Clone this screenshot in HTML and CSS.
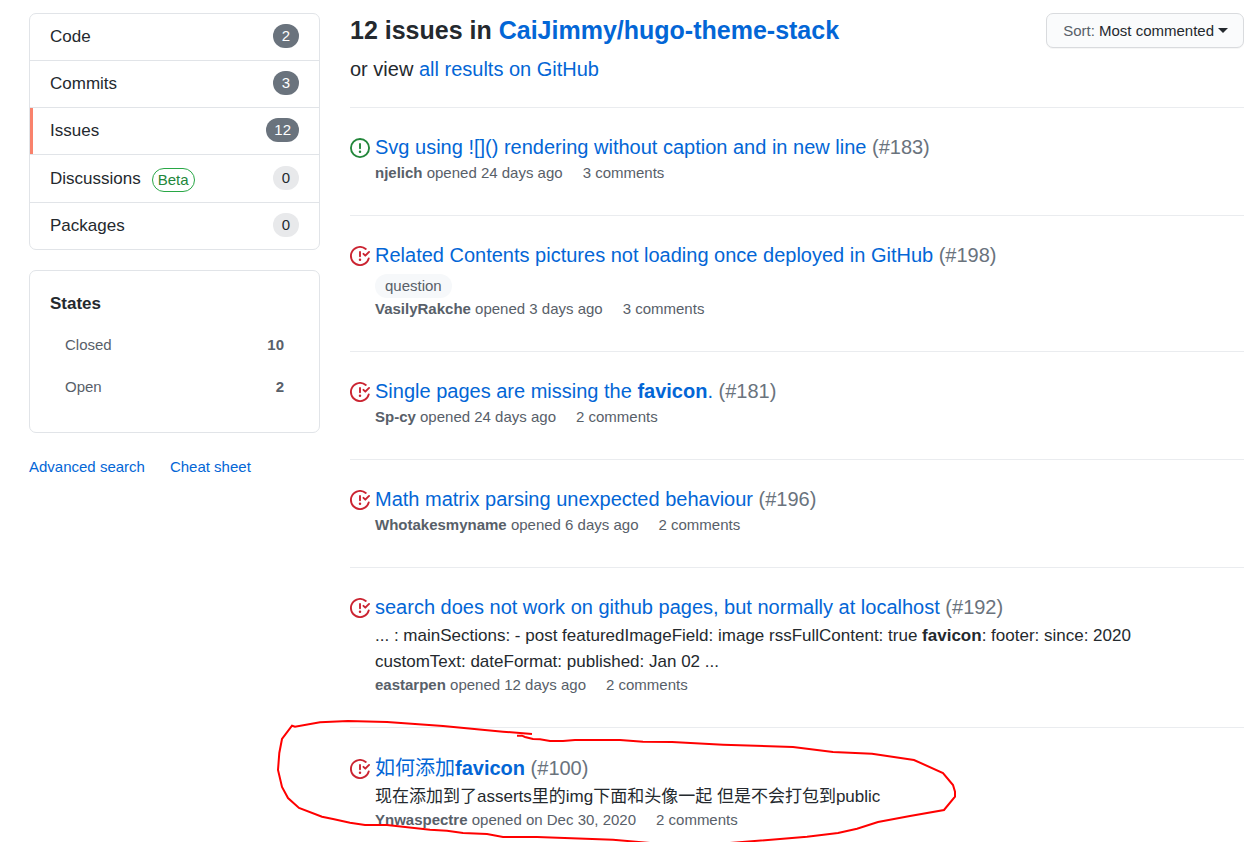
FILE: index.html
```html
<!DOCTYPE html>
<html lang="en">
<head>
<meta charset="utf-8">
<title>Issue search results</title>
<link rel="stylesheet" href="styles.css">
</head>
<body>
<svg class="sprite" aria-hidden="true">
  <symbol id="issue-open" viewBox="0 0 16 16"><path d="M8 1.5a6.5 6.5 0 100 13 6.5 6.5 0 000-13zM0 8a8 8 0 1116 0A8 8 0 010 8zm9 3a1 1 0 11-2 0 1 1 0 012 0zm-.25-6.25a.75.75 0 00-1.5 0v3.5a.75.75 0 001.5 0v-3.5z"/></symbol>
  <symbol id="issue-closed" viewBox="0 0 16 16"><path d="M1.5 8a6.5 6.5 0 0110.65-5.003.75.75 0 00.959-1.153 8 8 0 102.592 8.33.75.75 0 10-1.444-.407A6.5 6.5 0 011.5 8zM8 12a1 1 0 100-2 1 1 0 000 2zm0-8a.75.75 0 01.75.75v3.5a.75.75 0 11-1.5 0v-3.5A.75.75 0 018 4zm4.78 4.28l3-3a.75.75 0 00-1.06-1.06l-2.47 2.47-.97-.97a.749.749 0 10-1.06 1.06l1.5 1.5a.75.75 0 001.06 0z"/></symbol>
</svg>
<div class="page">
  <aside class="sidebar">
    <nav class="menu" aria-label="Result types">
      <a class="menu-item" href="#">Code <span class="counter counter-dark">2</span></a>
      <a class="menu-item" href="#">Commits <span class="counter counter-dark">3</span></a>
      <a class="menu-item selected" href="#" aria-current="page">Issues <span class="counter counter-dark">12</span></a>
      <a class="menu-item" href="#">Discussions <span class="beta">Beta</span> <span class="counter">0</span></a>
      <a class="menu-item" href="#">Packages <span class="counter">0</span></a>
    </nav>
    <section class="states">
      <h2 class="states-title">States</h2>
      <ul class="states-list">
        <li><a class="state" href="#">Closed <span class="state-count">10</span></a></li>
        <li><a class="state" href="#">Open <span class="state-count">2</span></a></li>
      </ul>
    </section>
    <div class="help">
      <a class="link" href="#">Advanced search</a>
      <a class="link" href="#">Cheat sheet</a>
    </div>
  </aside>
  <main class="results">
    <header class="results-head">
      <div>
        <h1 class="heading">12 issues in <a class="link" href="#">CaiJimmy/hugo-theme-stack</a></h1>
        <p class="subheading">or view <a class="link" href="#">all results on GitHub</a></p>
      </div>
      <button class="sort" type="button"><span class="sort-label">Sort:</span> Most commented<span class="caret"></span></button>
    </header>

    <article class="issue">
      <svg class="icon icon-open" role="img" aria-label="Open issue"><use href="#issue-open"/></svg>
      <div class="issue-body">
        <h2 class="issue-title"><a class="link" href="#">Svg using ![]() rendering without caption and in new line</a> <span class="number">(#183)</span></h2>
        <div class="meta"><span><a class="author" href="#">njelich</a> opened 24 days ago</span><span>3 comments</span></div>
      </div>
    </article>

    <article class="issue">
      <svg class="icon icon-closed" role="img" aria-label="Closed issue"><use href="#issue-closed"/></svg>
      <div class="issue-body">
        <h2 class="issue-title"><a class="link" href="#">Related Contents pictures not loading once deployed in GitHub</a> <span class="number">(#198)</span></h2>
        <a class="label" href="#">question</a>
        <div class="meta"><span><a class="author" href="#">VasilyRakche</a> opened 3 days ago</span><span>3 comments</span></div>
      </div>
    </article>

    <article class="issue">
      <svg class="icon icon-closed" role="img" aria-label="Closed issue"><use href="#issue-closed"/></svg>
      <div class="issue-body">
        <h2 class="issue-title"><a class="link" href="#">Single pages are missing the <b>favicon</b>.</a> <span class="number">(#181)</span></h2>
        <div class="meta"><span><a class="author" href="#">Sp-cy</a> opened 24 days ago</span><span>2 comments</span></div>
      </div>
    </article>

    <article class="issue">
      <svg class="icon icon-closed" role="img" aria-label="Closed issue"><use href="#issue-closed"/></svg>
      <div class="issue-body">
        <h2 class="issue-title"><a class="link" href="#">Math matrix parsing unexpected behaviour</a> <span class="number">(#196)</span></h2>
        <div class="meta"><span><a class="author" href="#">Whotakesmyname</a> opened 6 days ago</span><span>2 comments</span></div>
      </div>
    </article>

    <article class="issue">
      <svg class="icon icon-closed" role="img" aria-label="Closed issue"><use href="#issue-closed"/></svg>
      <div class="issue-body">
        <h2 class="issue-title"><a class="link" href="#">search does not work on github pages, but normally at localhost</a> <span class="number">(#192)</span></h2>
        <p class="excerpt">... : mainSections: - post featuredImageField: image rssFullContent: true <b>favicon</b>: footer: since: 2020 customText: dateFormat: published: Jan 02 ...</p>
        <div class="meta"><span><a class="author" href="#">eastarpen</a> opened 12 days ago</span><span>2 comments</span></div>
      </div>
    </article>

    <article class="issue issue-marked">
      <svg class="icon icon-closed" role="img" aria-label="Closed issue"><use href="#issue-closed"/></svg>
      <div class="issue-body">
        <h2 class="issue-title" lang="zh-CN"><a class="link" href="#">如何添加<b>favicon</b></a> <span class="number">(#100)</span></h2>
        <p class="excerpt" lang="zh-CN">现在添加到了asserts里的img下面和头像一起 但是不会打包到public</p>
        <div class="meta"><span><a class="author" href="#">Ynwaspectre</a> opened on Dec 30, 2020</span><span>2 comments</span></div>
      </div>
      <svg class="scribble" viewBox="270 717 690 125" aria-hidden="true"><path d="M532 734L503 731.7 443 726 387 722 348 721 320 722.3 295 726.7 292 725.7 282 739 279.3 753 278 770 282 787 288 798 299 808 322 816.7 333 819 350 822.7 365 825 387 825 430 829.7 447 830.7 463 833 487 834 503 837 537 837 613 839.7 650 843 730 843 807 836.7 838 833 857 828.7 878 822 910 816 944 810 955 796.7 955 791.7 953 785 943 773 914 760 872 753.7 833 752 793 747 723 744.7 672 742 643 741.7 620 740 575 740 563 741 550 741 540 739.3 533 739 525 737 522 735.7 517 735.7"/></svg>
    </article>
  </main>
</div>
</body>
</html>
```
FILE: styles.css
```css
* { box-sizing: border-box; }

body {
  margin: 0;
  background: #fff;
  color: #24292e;
  font: 17px/26px "Liberation Sans", "Noto Sans CJK SC", sans-serif;
}

h1, h2, p, ul { margin: 0; padding: 0; }
a { color: inherit; text-decoration: none; }
.link { color: #0366d6; }
.link:hover { text-decoration: underline; }
.sprite { position: absolute; width: 0; height: 0; }

.page {
  display: flex;
  gap: 30px;
  padding: 13px 13px 0 29px;
}

/* Sidebar */
.sidebar { flex: 0 0 291px; }

.menu {
  border: 1px solid #e1e4e8;
  border-radius: 7px;
  overflow: hidden;
}
.menu-item {
  display: flex;
  align-items: center;
  padding: 9px 20px;
  border-bottom: 1px solid #e1e4e8;
  line-height: 28px;
}
.menu-item:last-child { border-bottom: 0; }
.selected { box-shadow: inset 3px 0 #f9826c; }

.counter {
  margin: 1px 0 3px auto;
  min-width: 26px;
  padding: 0 8px;
  border-radius: 24px;
  background: #e8e9eb;
  font-size: 15px;
  line-height: 24px;
  text-align: center;
}
.counter-dark { background: #6a737d; color: #fff; }

.beta {
  margin: 4px 0 1px 11px;
  padding: 0 5px;
  border: 1px solid #28a745;
  border-radius: 24px;
  color: #22863a;
  font-size: 15px;
  line-height: 22px;
}

.states {
  margin-top: 20px;
  padding: 20px 20px 24px;
  border: 1px solid #e1e4e8;
  border-radius: 7px;
}
.states-title { margin-bottom: 7px; font-size: 17px; line-height: 26px; }
.states-list { list-style: none; }
.state {
  display: flex;
  justify-content: space-between;
  padding: 10px 15px;
  color: #586069;
  font-size: 15px;
  line-height: 22px;
}
.state-count { font-weight: bold; }

.help {
  display: flex;
  gap: 25px;
  margin-top: 23px;
  font-size: 15px;
  line-height: 22px;
}

/* Results */
.results { flex: 1; min-width: 0; }

.results-head {
  display: flex;
  align-items: flex-start;
  justify-content: space-between;
  padding-bottom: 23px;
}
.heading { font-size: 25px; line-height: 34px; }
.subheading { margin-top: 7px; font-size: 20px; line-height: 30px; }

.sort {
  display: flex;
  align-items: center;
  gap: 4px;
  padding: 0 15px 0 16px;
  border: 1px solid #d9dbde;
  border-radius: 7px;
  background: #fafbfc;
  box-shadow: 0 1px 0 rgba(27, 31, 35, .04);
  color: #24292e;
  font: 15px/33px "Liberation Sans", sans-serif;
}
.sort-label { color: #586069; }
.caret {
  border: 5px solid transparent;
  border-top-color: #24292e;
  border-bottom: 0;
}

.issue {
  display: flex;
  gap: 5px;
  padding: 24px 0 31px;
  border-top: 1px solid #eaecef;
}
.icon { flex: none; width: 20px; height: 20px; margin-top: 6px; }
.icon-open { fill: #22863a; }
.icon-closed { fill: #cb2431; }
.issue-body { flex: 1; min-width: 0; padding-right: 60px; }
.issue-title { font-size: 20px; font-weight: normal; line-height: 30px; }
.number { color: #6a737d; }
.excerpt { margin: 1px 0 -1px; }

.label {
  display: block;
  width: fit-content;
  margin-top: 4px;
  padding: 0 10px;
  border-radius: 24px;
  background: #f6f8fa;
  color: #586069;
  font-size: 15px;
  line-height: 24px;
}
.meta {
  display: flex;
  gap: 20px;
  color: #586069;
  font-size: 15px;
  line-height: 22px;
}
.author { font-weight: bold; }

/* Hand-drawn ring laid over the last result */
.issue-marked { position: relative; padding: 25px 0 11px; }
.scribble {
  position: absolute;
  left: -80px;
  top: -11px;
  width: 690px;
  height: 125px;
  fill: none;
  stroke: #f00;
  stroke-width: 2;
  pointer-events: none;
}
```
